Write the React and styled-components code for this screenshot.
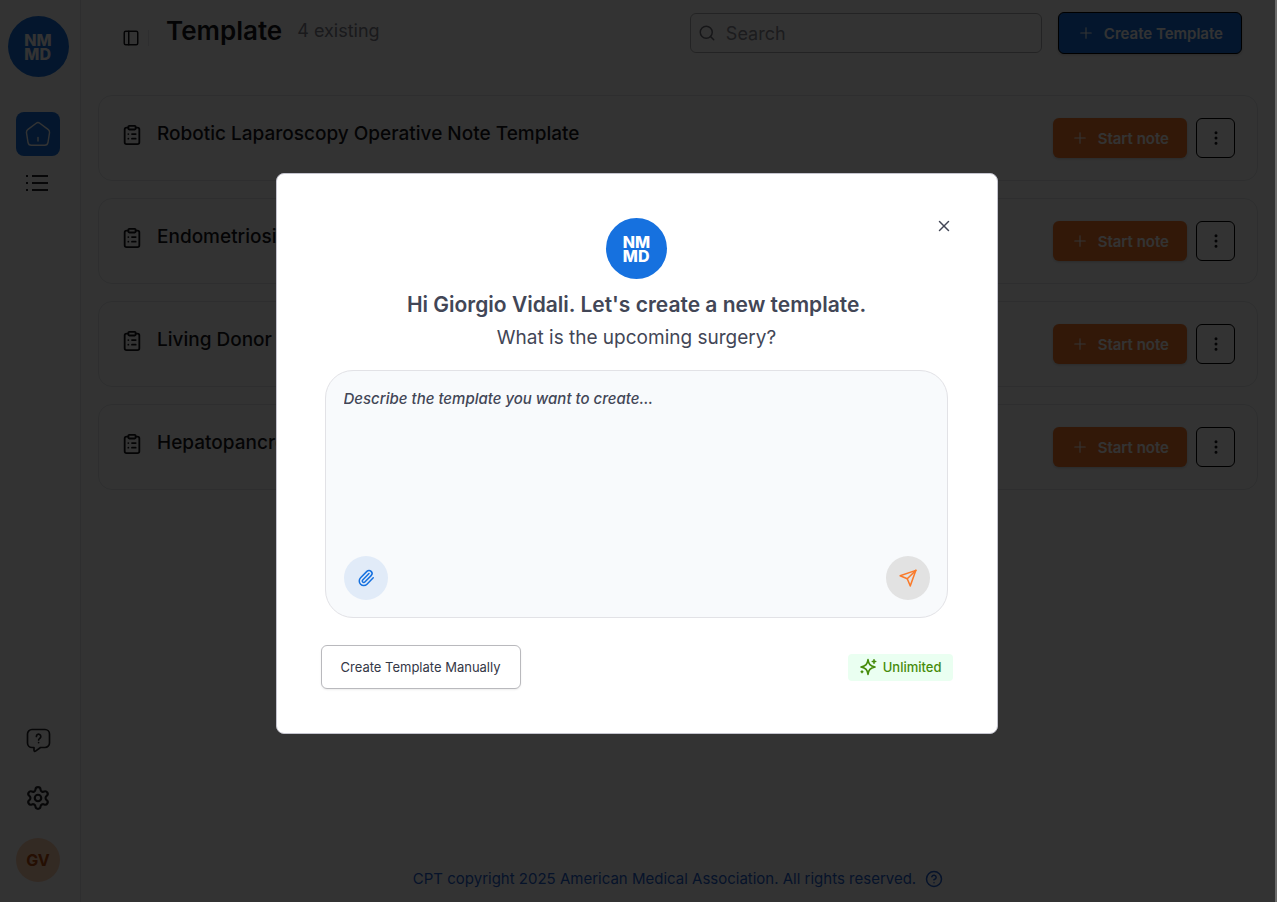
import React from 'react'
import styled, { createGlobalStyle } from 'styled-components'
import { CircleHelp, ClipboardList, EllipsisVertical, PanelLeft, Paperclip, Plus, Search, Settings, X } from 'lucide-react'

const GlobalStyle = createGlobalStyle`
*{
box-sizing: border-box;
}
body{
margin: 0;
background-color: white;
color: #18181b;
font-family: Inter, "Liberation Sans", sans-serif;
font-size: 15px;
}
button,input,textarea{
font: inherit;
}
`

const Layout = styled.div`
display: flex;
min-height: 100vh;
`

const Sidebar = styled.aside`
width: 81px;
flex-shrink: 0;
padding: 16px 20px 20px 16px;
border-right: 1px solid #e5e7eb;
display: flex;
flex-direction: column;
align-items: center;
`

const LogoCircle = styled.div`
width: 61px;
height: 61px;
flex-shrink: 0;
border-radius: 50%;
background-color: #1671df;
color: white;
display: flex;
align-items: center;
justify-content: center;
font-size: 16px;
font-weight: 800;
line-height: 14px;
`

const SideNav = styled.nav`
margin-top: 35px;
display: flex;
flex-direction: column;
gap: 5px;
`

const NavLink = styled.a`
width: 44px;
height: 44px;
border-radius: 8px;
background-color: ${props => props.$active ? '#1671df' : 'transparent'};
color: ${props => props.$active ? 'white' : '#27272a'};
display: flex;
align-items: center;
justify-content: center;
`

const SideBottom = styled.div`
margin-top: auto;
display: flex;
flex-direction: column;
align-items: center;
gap: 14px;
`

const Avatar = styled.div`
width: 44px;
height: 44px;
margin-top: 4px;
border-radius: 50%;
background-color: #ffcfb0;
color: #b84a0e;
display: flex;
align-items: center;
justify-content: center;
font-size: 16px;
font-weight: 700;
`

const Main = styled.main`
flex: 1;
padding: 12px 19px 11px 17px;
display: flex;
flex-direction: column;
`

const Header = styled.header`
padding: 0 16px;
display: flex;
align-items: flex-start;
`

const PanelButton = styled.button`
width: 34px;
height: 52px;
padding: 0;
border: none;
background: none;
color: inherit;
display: flex;
align-items: center;
justify-content: center;
`

const Separator = styled.div`
width: 1px;
height: 16px;
margin-top: 18px;
background-color: #e5e7eb;
`

const Title = styled.h1`
margin: 0 0 0 17px;
font-size: 26px;
font-weight: 600;
line-height: 38px;
`

const Count = styled.span`
margin-left: 15px;
color: #80808c;
font-size: 18px;
line-height: 38px;
`

const SearchBox = styled.label`
width: 352px;
height: 40px;
margin: 1px 16px 0 auto;
padding: 0 7px;
border: 1px solid #b0b0b4;
border-radius: 6px;
display: flex;
align-items: center;
gap: 10px;
color: #71717a;
`

const SearchInput = styled.input`
flex: 1;
min-width: 0;
padding: 0;
border: none;
outline: none;
background: none;
font-size: 18px;
&::placeholder{
color: #8b8b94;
opacity: 1;
}
`

const Button = styled.button`
height: ${props => props.$primary ? '42px' : '40px'};
padding: 0 18px;
border: ${props => props.$primary ? '1px solid black' : 'none'};
border-radius: 6px;
background-color: ${props => props.$primary ? '#1671df' : '#fa7a2a'};
color: white;
display: flex;
align-items: center;
gap: 9px;
font-weight: 600;
box-shadow: 0 1px 3px rgba(0, 0, 0, 0.2);
`

const List = styled.div`
margin-top: 31px;
display: flex;
flex-direction: column;
gap: 17px;
`

const Card = styled.article`
height: 86px;
padding: 22px;
border: 1px solid #e5e7eb;
border-radius: 14px;
display: flex;
align-items: flex-start;
`

const CardIcon = styled.span`
display: flex;
padding-top: 6px;
`

const CardTitle = styled.h2`
flex: 1;
margin: 0 0 0 14px;
font-size: 19px;
font-weight: 500;
line-height: 32px;
`

const MoreButton = styled.button`
width: 39px;
height: 40px;
margin-left: 9px;
padding: 0;
border: 1px solid black;
border-radius: 6px;
background: none;
color: inherit;
display: flex;
align-items: center;
justify-content: center;
`

const Footer = styled.footer`
margin-top: auto;
display: flex;
align-items: center;
justify-content: center;
gap: 9px;
color: #1e5fd0;
line-height: 24px;
`

const Overlay = styled.div`
position: fixed;
inset: 0;
padding: 5px 2px 0 0;
border-right: 2px solid #6b6b6b;
background-color: rgba(0, 0, 0, 0.8);
display: flex;
align-items: center;
justify-content: center;
`

const Dialog = styled.section`
position: relative;
width: 722px;
max-width: 100%;
padding: 44px;
border: 1px solid #c4c4ce;
border-radius: 8px;
background-color: white;
color: #424656;
display: flex;
flex-direction: column;
align-items: center;
`

const CloseButton = styled.button`
position: absolute;
top: 43px;
right: 44px;
padding: 0;
border: none;
background: none;
color: #424656;
display: flex;
`

const Greeting = styled.h2`
margin: 9px 0 0;
font-size: 21px;
font-weight: 600;
line-height: 34px;
`

const Question = styled.p`
margin: 0;
font-size: 19px;
line-height: 32px;
`

const Prompt = styled.div`
align-self: stretch;
height: 248px;
margin: 16px 5px 0 4px;
padding: 16px 17px 17px 18px;
border: 1px solid #e2e2e6;
border-radius: 28px;
background-color: #f8fafc;
display: flex;
flex-direction: column;
`

const PromptInput = styled.textarea`
flex: 1;
padding: 0;
border: none;
outline: none;
resize: none;
background: none;
line-height: 24px;
&::placeholder{
color: #424656;
opacity: 1;
font-style: italic;
font-weight: 500;
}
`

const PromptActions = styled.div`
display: flex;
justify-content: space-between;
`

const RoundButton = styled.button`
width: 44px;
height: 44px;
padding: 0;
border: none;
border-radius: 50%;
background-color: ${props => props.$send ? '#e2e2e2' : '#e1ebf8'};
color: ${props => props.$send ? '#fa7a2a' : '#1671df'};
display: flex;
align-items: center;
justify-content: center;
`

const DialogFooter = styled.div`
align-self: stretch;
margin-top: 27px;
display: flex;
align-items: center;
justify-content: space-between;
`

const ManualButton = styled.button`
height: 44px;
padding: 0 19px;
border: 1px solid #b9b9bd;
border-radius: 6px;
background-color: white;
color: #343746;
font-size: 13px;
box-shadow: 0 1px 2px rgba(0, 0, 0, 0.08);
`

const Badge = styled.span`
height: 27px;
padding: 0 11px;
border-radius: 4px;
background-color: #eafff1;
color: #468c0a;
display: flex;
align-items: center;
gap: 6px;
font-size: 13px;
font-weight: 500;
`

const templates = [
    'Robotic Laparoscopy Operative Note Template',
    'Endometriosis Excision Template',
    'Living Donor Nephrectomy Template',
    'Hepatopancreatobiliary Template',
]

const Logo = () => (
    <LogoCircle>
        <span>NM<br />MD</span>
    </LogoCircle>
)

const HomeIcon = () => (
    <svg width="26" height="26" viewBox="0 0 26 26" fill="none" stroke="currentColor" strokeWidth="1.4" strokeLinecap="round" strokeLinejoin="round">
        <path d="M11.2 2.2 3 8.4C1.8 9.3 1.3 10.4 1.5 11.8L3 21.3c.3 1.9 1.5 3 3.4 3h13.2c1.9 0 3.1-1.1 3.4-3l1.5-9.500c.2-1.400-.3-2.500-1.500-3.400L14.800 2.200c-1.200-.9-2.400-.9-3.600 0Z" />
        <path d="M13 16.500v3.500" />
    </svg>
)

const ListIcon = () => (
    <svg width="24" height="18" viewBox="0 0 24 18" fill="none" stroke="currentColor" strokeWidth="2">
        <path d="M6 2h16M6 9h16M6 16h16" />
        <path d="M0 2h2M0 9h2M0 16h2" />
    </svg>
)

const HelpBubble = () => (
    <svg width="26" height="26" viewBox="0 0 26 26" fill="none" stroke="currentColor" strokeWidth="1.7" strokeLinecap="round" strokeLinejoin="round">
        <path d="M7 2.500h13a4.500 4.500 0 0 1 4.500 4.500v9a4.500 4.500 0 0 1-4.500 4.500h-4.500l-5 3.600c-.8.500-1.500.1-1.500-.8v-2.800H7A4.500 4.500 0 0 1 2.500 16V7A4.500 4.500 0 0 1 7 2.500Z" />
        <path d="M11.400 9.400a2.200 2.200 0 1 1 3.500 1.800c-.8.600-1.300.9-1.300 1.800M13.600 15.500v.1" />
    </svg>
)

const SendIcon = () => (
    <svg width="18" height="18" viewBox="0 0 24 24" fill="none" stroke="currentColor" strokeWidth="2" strokeLinecap="round" strokeLinejoin="round">
        <path d="M22.500 1.800 15 22.500l-4-9.500-9.500-4Z" />
        <path d="M22.500 1.800 11 13" />
    </svg>
)

const SparkleIcon = () => (
    <svg width="18" height="18" viewBox="0 0 18 18" fill="none" stroke="currentColor" strokeWidth="1.6" strokeLinecap="round" strokeLinejoin="round">
        <path d="M9 1.600c.7 4.700 2 6.300 7 7.400-5 1.100-6.300 2.700-7 7.400-.7-4.700-2-6.300-7-7.400 5-1.100 6.300-2.700 7-7.400Z" />
        <path d="M15 1.800v3.400M13.300 3.500h3.400M3 13v1.600M2.200 13.800h1.600" />
    </svg>
)

const App = () => {
    return (
        <>
            <GlobalStyle />
            <Layout>
                <Sidebar>
                    <Logo />
                    <SideNav>
                        <NavLink href="#home" $active aria-label="Home"><HomeIcon /></NavLink>
                        <NavLink href="#notes" aria-label="Notes"><ListIcon /></NavLink>
                    </SideNav>
                    <SideBottom>
                        <NavLink href="#help" aria-label="Help"><HelpBubble /></NavLink>
                        <NavLink href="#settings" aria-label="Settings"><Settings size={26} strokeWidth={2} /></NavLink>
                        <Avatar>GV</Avatar>
                    </SideBottom>
                </Sidebar>
                <Main>
                    <Header>
                        <PanelButton aria-label="Toggle sidebar"><PanelLeft size={18} /></PanelButton>
                        <Separator />
                        <Title>Template</Title>
                        <Count>4 existing</Count>
                        <SearchBox>
                            <Search size={18} />
                            <SearchInput type="text" placeholder="Search" aria-label="Search" />
                        </SearchBox>
                        <Button $primary><Plus size={18} strokeWidth={1.5} />Create Template</Button>
                    </Header>
                    <List>
                        {templates.map(name => (
                            <Card key={name}>
                                <CardIcon><ClipboardList size={22} /></CardIcon>
                                <CardTitle>{name}</CardTitle>
                                <Button><Plus size={18} strokeWidth={1.5} />Start note</Button>
                                <MoreButton aria-label="More options"><EllipsisVertical size={18} /></MoreButton>
                            </Card>
                        ))}
                    </List>
                    <Footer>
                        CPT copyright 2025 American Medical Association. All rights reserved.
                        <CircleHelp size={18} />
                    </Footer>
                </Main>
            </Layout>
            <Overlay>
                <Dialog role="dialog" aria-labelledby="greeting">
                    <CloseButton aria-label="Close"><X size={18} strokeWidth={2} /></CloseButton>
                    <Logo />
                    <Greeting id="greeting">Hi Giorgio Vidali. Let's create a new template.</Greeting>
                    <Question>What is the upcoming surgery?</Question>
                    <Prompt>
                        <PromptInput placeholder="Describe the template you want to create..." aria-label="Template description" />
                        <PromptActions>
                            <RoundButton aria-label="Attach file"><Paperclip size={18} /></RoundButton>
                            <RoundButton $send aria-label="Send"><SendIcon /></RoundButton>
                        </PromptActions>
                    </Prompt>
                    <DialogFooter>
                        <ManualButton>Create Template Manually</ManualButton>
                        <Badge><SparkleIcon />Unlimited</Badge>
                    </DialogFooter>
                </Dialog>
            </Overlay>
        </>
    )
}

export default App
